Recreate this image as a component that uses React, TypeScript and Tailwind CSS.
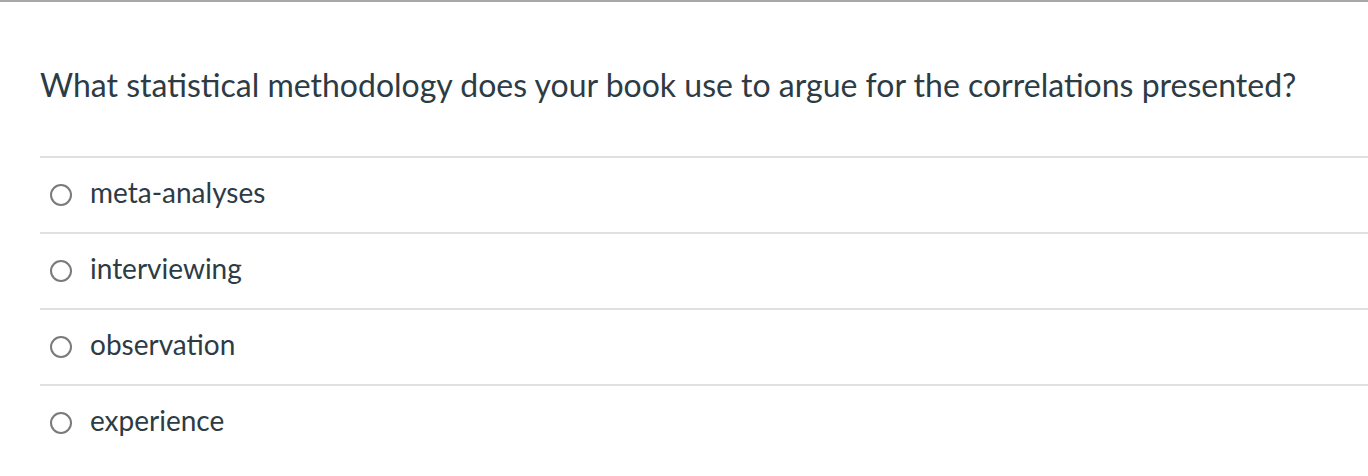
const OPTIONS = ["meta-analyses", "interviewing", "observation", "experience"];

export default function App() {
  return (
    <div className="h-[476px] w-[1368px] overflow-hidden border-t-2 border-[#a8a8a8] bg-white font-['Lato',sans-serif] text-[#2d3b45]">
      <div className="pl-10">
        <h1 className="pt-[61px] pb-[49px] text-[32px] leading-[44px] font-normal">
          What statistical methodology does your book use to argue for the correlations presented?
        </h1>
        {OPTIONS.map((opt) => (
          <label
            key={opt}
            className="flex h-[76px] items-center border-t-2 border-[#e0e0e0] pl-[10px]"
          >
            <span className="h-[22px] w-[22px] shrink-0 rounded-full border-2 border-[#7a7a7a] bg-white" />
            <span className="ml-[18px] pb-[6px] text-[28px] leading-none">{opt}</span>
          </label>
        ))}
      </div>
    </div>
  );
}
